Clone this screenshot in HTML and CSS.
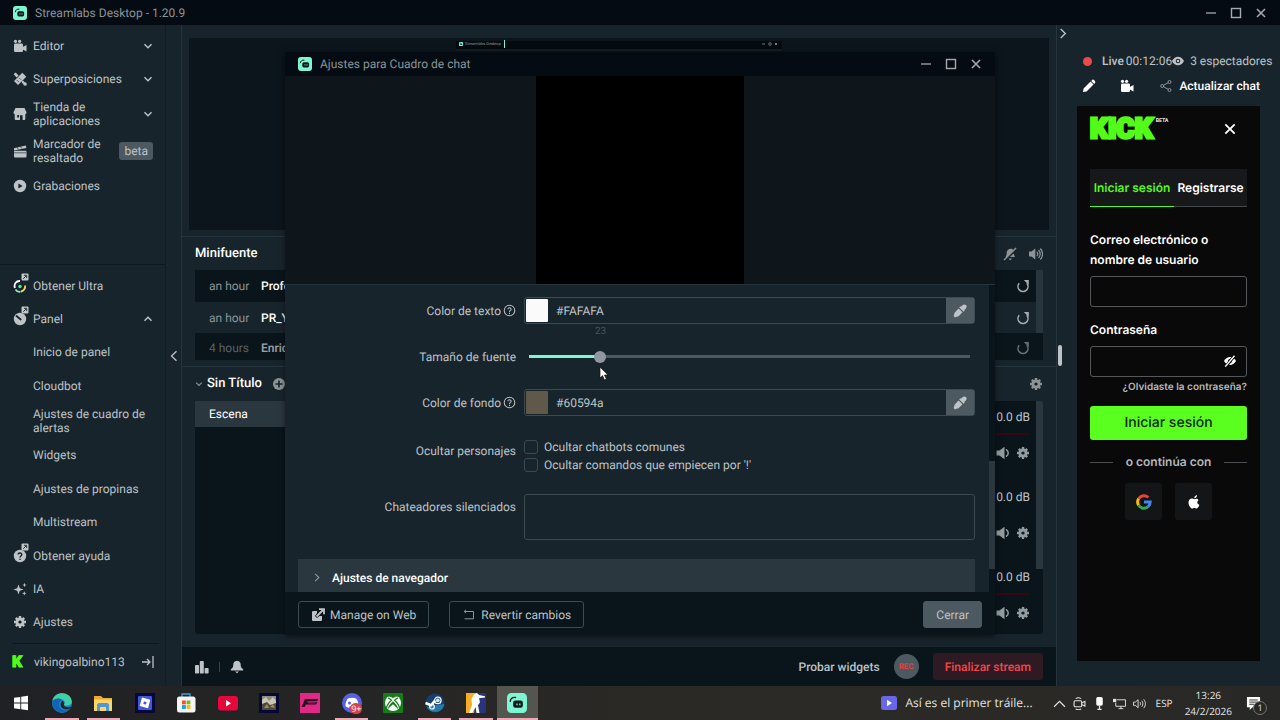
FILE: index.html
```html
<!DOCTYPE html>
<html lang="es">
<head>
    <meta charset="UTF-8">
    <meta name="viewport" content="width=device-width, initial-scale=1.0">
    <title>Streamlabs Desktop</title>
    <link rel="stylesheet" href="styles.css">
</head>
<body>
    <!-- shared icons -->
    <svg class="sprite" aria-hidden="true">
        <symbol id="slobs" viewBox="0 0 14 14">
            <rect width="14" height="14" rx="3" fill="#80f5d2"/>
            <rect x="4.300" y="5.200" width="6.800" height="5.200" rx="1.600" fill="#0a1a1f"/>
            <path d="M2.300 5.800C2.500 4 4 2.900 6 3.100" stroke="#0a1a1f" stroke-width="1" fill="none" stroke-linecap="round"/>
            <path d="M7 7.300v1.200M9 7.300v1.200" stroke="#80f5d2" stroke-width="0.900"/>
        </symbol>
        <symbol id="minimize" viewBox="0 0 12 12"><path d="M1 6h10" stroke="currentColor" stroke-width="1.300"/></symbol>
        <symbol id="maximize" viewBox="0 0 12 12"><rect x="1.500" y="1.500" width="9" height="9" fill="none" stroke="currentColor" stroke-width="1.400"/></symbol>
        <symbol id="close" viewBox="0 0 12 12"><path d="M2 2l8 8M10 2l-8 8" stroke="currentColor" stroke-width="1.600"/></symbol>
        <symbol id="chev-down" viewBox="0 0 10 10"><path d="M1.500 3.200L5 6.800l3.500-3.600" fill="none" stroke="currentColor" stroke-width="1.400"/></symbol>
        <symbol id="chev-up" viewBox="0 0 10 10"><path d="M1.500 6.800L5 3.200l3.500 3.600" fill="none" stroke="currentColor" stroke-width="1.400"/></symbol>
        <symbol id="chev-left" viewBox="0 0 8 12"><path d="M6.500 1.200L1.500 6l5 4.800" fill="none" stroke="currentColor" stroke-width="1.300"/></symbol>
        <symbol id="chev-right" viewBox="0 0 8 12"><path d="M1.500 1.200L6.500 6l-5 4.800" fill="none" stroke="currentColor" stroke-width="1.500"/></symbol>
        <symbol id="camera" viewBox="0 0 14 14">
            <g fill="currentColor"><circle cx="2.500" cy="2.300" r="1.600"/><circle cx="6.600" cy="2.300" r="1.600"/><rect x="1" y="4.600" width="9" height="8.400" rx="1.200"/><path d="M9.800 8l3.700-2v6.500l-3.700-2z"/></g>
        </symbol>
        <symbol id="brush" viewBox="0 0 14 14">
            <g fill="currentColor"><path d="M9.300.7l4 4-8.300 8.300-4-4zM.6 2.200L2.600.6l3 2.800-2 2zM10 8.400l1.500 1.500 2 3.500-3.600-1.700-1.500-1.700z"/><circle cx="12" cy="12" r="1.800"/></g>
            <path d="M3.800 8l2 2M6 5.800l2 2" stroke="#18242c" stroke-width="0.600"/>
        </symbol>
        <symbol id="store" viewBox="0 0 14 14">
            <path fill="currentColor" fill-rule="evenodd" d="M2.500 1h9l2 4.200c0 1.200-.6 1.800-1.200 2V12a1 1 0 0 1-1 1H9.600V8.200H7V13H2.700a1 1 0 0 1-1-1V7.200C1.100 7 .5 6.400.5 5.200zM4.200 8v2.500H6V8z"/>
        </symbol>
        <symbol id="clapper" viewBox="0 0 14 14">
            <g fill="currentColor"><rect x="1" y="6.800" width="12.500" height="6.700" rx="1"/><path d="M.8 4.300l12-2.900.6 2.600L1.200 6.400z"/></g>
            <path d="M4 3.200l1.400 2.300M7.500 2.400l1.400 2.300M1 8.800h12" stroke="#18242c" stroke-width="0.600"/>
        </symbol>
        <symbol id="play" viewBox="0 0 14 14"><circle cx="7" cy="7" r="6.200" fill="currentColor"/><path d="M5.400 4.500v5L9.600 7z" fill="#18242c"/></symbol>
        <symbol id="ext" viewBox="0 0 8 8"><rect x=".5" y=".5" width="7" height="7" rx="1" fill="#c0c6c9"/><path d="M2.300 5.700l3-3M3 2.300h2.700V5" fill="none" stroke="#18242c" stroke-width="0.900"/></symbol>
        <symbol id="gear" viewBox="0 0 14 14">
            <path d="M7 1v12M1 7h12M2.800 2.800l8.400 8.400M11.200 2.800l-8.400 8.400" stroke="currentColor" stroke-width="2.400"/>
            <circle cx="7" cy="7" r="3.200" fill="none" stroke="currentColor" stroke-width="2.600"/>
            <circle cx="7" cy="7" r="1.600" fill="#0d1a21"/>
        </symbol>
        <symbol id="speaker" viewBox="0 0 14 14"><path d="M.5 4.500h3L8.500.8v12.400l-5-3.700h-3z" fill="currentColor"/><path d="M10.500 3.800c2.300 1.600 2.300 4.800 0 6.400" fill="none" stroke="currentColor" stroke-width="1.500" stroke-linecap="round"/></symbol>
        <symbol id="reload" viewBox="0 0 14 14"><path d="M3.200 4.200a5 5 0 1 0 7.600 0" fill="none" stroke="currentColor" stroke-width="1.600"/><path d="M7.800 1h5v5z" fill="currentColor"/></symbol>
        <symbol id="dropper" viewBox="0 0 14 14">
            <path fill="currentColor" d="M13 1c-1.100-1-2.600-.7-3.500.2L8 2.700l-.6-.5-1.200 1.200 4.400 4.400 1.200-1.200-.5-.6 1.500-1.500c.9-.9 1.200-2.400.2-3.500zM5.600 4.500L2 8.200c-.7.700-.6 1.600-.9 2.600L.6 12l1.400 1.400 1.200-.6c1-.3 1.900-.2 2.600-.9l3.700-3.600z"/>
        </symbol>
        <symbol id="help" viewBox="0 0 14 14"><circle cx="7" cy="7" r="5.700" fill="none" stroke="currentColor" stroke-width="1.100"/><path d="M5.200 5.700C5.300 3.500 9 3.700 8.700 5.900 8.500 7 7 7 7 8.500M7 9.500v1.200" fill="none" stroke="currentColor" stroke-width="1.100"/></symbol>
    </svg>

    <header class="titlebar">
        <svg class="logo"><use href="#slobs"/></svg>
        <span>Streamlabs Desktop - 1.20.9</span>
        <div class="window-buttons">
            <button aria-label="Minimizar"><svg><use href="#minimize"/></svg></button>
            <button aria-label="Maximizar"><svg><use href="#maximize"/></svg></button>
            <button aria-label="Salir"><svg><use href="#close"/></svg></button>
        </div>
    </header>

    <div class="workspace">
        <nav class="sidebar">
            <ul class="menu menu-top">
                <li><a href="#"><svg class="icon"><use href="#camera"/></svg><span>Editor</span><svg class="chev"><use href="#chev-down"/></svg></a></li>
                <li><a href="#"><svg class="icon"><use href="#brush"/></svg><span>Superposiciones</span><svg class="chev"><use href="#chev-down"/></svg></a></li>
                <li class="double"><a href="#"><svg class="icon"><use href="#store"/></svg><span>Tienda de aplicaciones</span><svg class="chev"><use href="#chev-down"/></svg></a></li>
                <li class="double"><a href="#"><svg class="icon"><use href="#clapper"/></svg><span>Marcador de resaltado</span><em class="beta">beta</em></a></li>
                <li><a href="#"><svg class="icon"><use href="#play"/></svg><span>Grabaciones</span></a></li>
            </ul>
            <ul class="menu menu-bottom">
                <li><a href="#">
                    <svg class="icon" viewBox="0 0 14 14"><path d="M2 9a5 5 0 0 1 5-7" fill="none" stroke="#fff" stroke-width="1.800"/><path d="M2.500 10.500a5 5 0 0 0 5 2.200" fill="none" stroke="#8bf0a5" stroke-width="1.800"/><path d="M8 12.500a5 5 0 0 0 4-6" fill="none" stroke="#f2de55" stroke-width="1.800"/><circle cx="7" cy="7.500" r="1.700" fill="#55e8a0"/></svg>
                    <svg class="ext"><use href="#ext"/></svg><span>Obtener Ultra</span></a></li>
                <li><a href="#">
                    <svg class="icon" viewBox="0 0 14 14"><circle cx="7" cy="7" r="6.200" fill="currentColor"/><path d="M3.500 4l4.200 3.500" stroke="#18242c" stroke-width="1.800" stroke-linecap="round"/></svg>
                    <svg class="ext"><use href="#ext"/></svg><span>Panel</span><svg class="chev"><use href="#chev-up"/></svg></a></li>
                <li class="sub"><a href="#">Inicio de panel</a></li>
                <li class="sub"><a href="#">Cloudbot</a></li>
                <li class="sub double"><a href="#">Ajustes de cuadro de alertas</a></li>
                <li class="sub"><a href="#">Widgets</a></li>
                <li class="sub"><a href="#">Ajustes de propinas</a></li>
                <li class="sub"><a href="#">Multistream</a></li>
                <li><a href="#">
                    <svg class="icon" viewBox="0 0 14 14"><circle cx="7" cy="7" r="6.200" fill="currentColor"/><path d="M5 5.500C5.200 3.300 9 3.500 8.700 5.800 8.500 7 7 7 7 8.500M7 9.800v1.300" fill="none" stroke="#18242c" stroke-width="1.400"/></svg>
                    <svg class="ext"><use href="#ext"/></svg><span>Obtener ayuda</span></a></li>
                <li><a href="#">
                    <svg class="icon" viewBox="0 0 14 14"><path fill="currentColor" d="M5.500 2.500l1.300 3.700 3.700 1.300-3.700 1.300-1.300 3.700-1.300-3.700L.5 7.500l3.700-1.300zM11.500.8l.6 1.600 1.600.6-1.600.6-.6 1.600-.6-1.600L9.300 3l1.600-.6zM11.300 9.200l.6 1.500 1.500.6-1.500.6-.6 1.500-.6-1.500-1.500-.6 1.500-.6z"/></svg>
                    <span>IA</span></a></li>
                <li><a href="#"><svg class="icon"><use href="#gear"/></svg><span>Ajustes</span></a></li>
            </ul>
            <a class="account" href="#">
                <b>K</b><span>vikingoalbino113</span>
                <svg class="logout" viewBox="0 0 12 12"><path d="M0 6h7.500M5 3l3 3-3 3M11 0v12" fill="none" stroke="currentColor" stroke-width="1.300"/></svg>
            </a>
        </nav>

        <button class="collapse" aria-label="Contraer menú"><svg><use href="#chev-left"/></svg></button>

        <main class="editor">
            <div class="display">
                <div class="mirror">
                    <svg><use href="#slobs"/></svg>
                    <span>Streamlabs Desktop</span>
                    <i></i>
                    <svg class="mirror-buttons" viewBox="0 0 16 4"><path d="M0 2h3M13 1l2 2M15 1l-2 2" stroke="#8b9398" stroke-width="0.800"/><circle cx="8" cy="2" r="1.300" fill="none" stroke="#8b9398" stroke-width="0.700"/></svg>
                </div>
            </div>

            <section class="feed">
                <header>
                    <h2>Minifuente</h2>
                    <button aria-label="Silenciar avisos"><svg viewBox="0 0 14 14"><path d="M2.500 10c1.200-1.200 1-2.500 1.200-4.500C4.200 1 9.500.8 10.500 3.300L4 10zM7 10h5L10.500 6.500zM5.500 11.500h3.500l-1.700 2z" fill="currentColor"/><path d="M1 13L13 1" stroke="currentColor" stroke-width="1.400"/></svg></button>
                    <button aria-label="Volumen"><svg viewBox="0 0 14 14"><path d="M0 4.500h2.500L6.300 1.500v11L2.500 9.500H0z" fill="currentColor"/><path d="M7.700 4.800c1.200 1.200 1.200 3.200 0 4.400M9.500 3c2.200 2.200 2.200 5.800 0 8M11.300 1.500c3 3 3 8 0 11" fill="none" stroke="currentColor" stroke-width="1.200"/></svg></button>
                </header>
                <ul>
                    <li><time>an hour</time><b>Profeta</b><svg><use href="#reload"/></svg></li>
                    <li><time>an hour</time><b>PR_YT</b><svg><use href="#reload"/></svg></li>
                    <li><time>4 hours</time><b>Enrique</b><svg><use href="#reload"/></svg></li>
                </ul>
            </section>

            <section class="studio">
                <header>
                    <svg class="chev"><use href="#chev-down"/></svg>
                    <h2>Sin Título</h2>
                    <svg class="plus" viewBox="0 0 12 12"><circle cx="6" cy="6" r="6" fill="#8c9498"/><path d="M6 2.500v7M2.500 6h7" stroke="#18242c" stroke-width="1.600"/></svg>
                    <button aria-label="Ajustes del mezclador"><svg><use href="#gear"/></svg></button>
                </header>
                <div class="panels">
                    <div class="scenes"><a href="#">Escena</a></div>
                    <div class="mixer">
                        <div class="channel"><span>0.0 dB</span><i></i><div><svg><use href="#speaker"/></svg><svg><use href="#gear"/></svg></div></div>
                        <div class="channel quiet"><span>0.0 dB</span><i></i><div><svg><use href="#speaker"/></svg><svg><use href="#gear"/></svg></div></div>
                        <div class="channel"><span>0.0 dB</span><i></i><div><svg><use href="#speaker"/></svg><svg><use href="#gear"/></svg></div></div>
                    </div>
                </div>
            </section>

            <footer class="statusbar">
                <svg viewBox="0 0 14 14"><g fill="currentColor"><rect x="0" y="5" width="4" height="8.500" rx=".8"/><rect x="4.800" y="1" width="4" height="12.500" rx=".8"/><rect x="9.600" y="8" width="4" height="5.500" rx=".8"/></g></svg>
                <i></i>
                <svg viewBox="0 0 14 14"><path d="M7 .8c3 .5 3.800 2 3.800 5 0 1.800 1.200 2.500 2.400 3.600v1H.8v-1C2 8.300 3.200 7.600 3.200 5.800c0-3 .8-4.500 3.800-5zM5 11.500h4L7 13.300z" fill="currentColor"/></svg>
                <a href="#">Probar widgets</a>
                <button class="rec">REC</button>
                <button class="end">Finalizar stream</button>
            </footer>
        </main>

        <aside class="live">
            <button class="fold" aria-label="Ocultar chat"><svg><use href="#chev-right"/></svg></button>
            <span class="grip"></span>
            <div class="stats">
                <i class="dot"></i><b>Live</b><span>00:12:06</span>
                <svg viewBox="0 0 12 10"><path d="M0 5c3-5.800 9-5.800 12 0-3 5.800-9 5.800-12 0z" fill="currentColor"/><circle cx="6" cy="5" r="2.300" fill="#18242c"/><circle cx="6" cy="5" r="1.300" fill="currentColor"/></svg>
                <span class="viewers">3 espectadores</span>
            </div>
            <div class="tools">
                <svg viewBox="0 0 14 14"><path d="M1 13l.6-3.500L8.500 2.600l3 3L4.600 12.400zM9.200 1.900L10.400.7c.8-.6 3.400 1.600 2.900 2.900l-1.200 1.300z" fill="#fff"/></svg>
                <svg class="white"><use href="#camera"/></svg>
                <svg viewBox="0 0 12 12"><g fill="none" stroke="#8c9498"><circle cx="2.200" cy="6" r="1.500"/><circle cx="9.500" cy="2" r="1.500"/><circle cx="9.500" cy="10" r="1.500"/><path d="M3.500 5.300l4.700-2.600M3.500 6.700l4.700 2.600"/></g></svg>
                <a href="#">Actualizar chat</a>
            </div>
            <form class="kick" onsubmit="return false">
                <div class="brand"><strong>KICK</strong><sup>BETA</sup><button type="button" aria-label="Cerrar panel"><svg><use href="#close"/></svg></button></div>
                <div class="tabs"><button type="button" class="active">Iniciar sesión</button><button type="button">Registrarse</button></div>
                <label for="user">Correo electrónico o nombre de usuario</label>
                <input type="text" id="user">
                <label for="pass">Contraseña</label>
                <div class="password">
                    <input type="password" id="pass">
                    <svg viewBox="0 0 14 12"><path d="M1 6c3-5.300 9-5.300 12 0-3 5.300-9 5.300-12 0z" fill="#fff"/><circle cx="7" cy="6" r="2" fill="#090909"/><path d="M2.500 12L12 0" stroke="#090909" stroke-width="3"/><path d="M2.200 11.600L11.500.8" stroke="#fff" stroke-width="1.400"/></svg>
                </div>
                <a class="forgot" href="#">¿Olvidaste la contraseña?</a>
                <button class="login">Iniciar sesión</button>
                <p class="or">o continúa con</p>
                <div class="providers">
                    <button type="button" aria-label="Google"><svg viewBox="0 0 16 16"><g fill="none" stroke-width="3"><path d="M2.600 4.800a6.200 6.200 0 0 1 9.700-1.300" stroke="#ea4335"/><path d="M2.600 11.200a6.200 6.200 0 0 1 0-6.400" stroke="#fbbc05"/><path d="M12 12.700a6.200 6.200 0 0 1-9.400-1.500" stroke="#34a853"/><path d="M8 8h6.200c0 2-.7 3.600-2.200 4.700" stroke="#4285f4"/></g></svg></button>
                    <button type="button" aria-label="Apple"><svg viewBox="0 0 16 16"><path fill="#fff" d="M11.300 8.300c0-1.500 1.200-2.300 1.300-2.400-1.400-1.800-3.400-1.200-4.300-.7-1-.5-1.700-.8-2.600-.6C2.200 5 1.800 9 3.600 12.300c1.500 2.800 2.700 2.400 3.700 1.900.8-.3 1.400-.3 2.200 0 1.700.9 2.800-.8 3.900-3.300-1.500-.6-2.100-1.600-2.100-2.600zM8.300 4.200c-.1-1.700 1.100-3 2.700-3.300.2 1.800-1.200 3.200-2.700 3.300z"/></svg></button>
                </div>
            </form>
        </aside>
    </div>

    <div class="dialog" role="dialog" aria-labelledby="dialog-title">
        <header class="titlebar">
            <svg class="logo"><use href="#slobs"/></svg>
            <span id="dialog-title">Ajustes para Cuadro de chat</span>
            <div class="window-buttons">
                <button aria-label="Minimizar"><svg><use href="#minimize"/></svg></button>
                <button aria-label="Maximizar"><svg><use href="#maximize"/></svg></button>
                <button aria-label="Salir"><svg><use href="#close"/></svg></button>
            </div>
        </header>
        <div class="preview"><div></div></div>
        <form class="settings" id="settings" onsubmit="return false">
            <div class="field">
                <label for="text-color">Color de texto<svg><use href="#help"/></svg></label>
                <div class="color"><i class="swatch light"></i><input type="text" id="text-color" value="#FAFAFA"><button type="button" aria-label="Elegir color de texto"><svg><use href="#dropper"/></svg></button></div>
            </div>
            <div class="field">
                <label for="font-size">Tamaño de fuente</label>
                <div class="slider">
                    <input type="range" id="font-size" min="10" max="96" value="23">
                    <output for="font-size">23</output>
                    <svg class="cursor" viewBox="0 0 10 15"><path d="M1 1v11l2.600-2.300L5.400 14l2-.9-1.800-4.100H9z" fill="#fff" stroke="#111" stroke-width="0.700"/></svg>
                </div>
            </div>
            <div class="field">
                <label for="bg-color">Color de fondo<svg><use href="#help"/></svg></label>
                <div class="color"><i class="swatch brown"></i><input type="text" id="bg-color" value="#60594a"><button type="button" aria-label="Elegir color de fondo"><svg><use href="#dropper"/></svg></button></div>
            </div>
            <div class="field checks">
                <span>Ocultar personajes</span>
                <div>
                    <label><input type="checkbox">Ocultar chatbots comunes</label>
                    <label><input type="checkbox">Ocultar comandos que empiecen por '!'</label>
                </div>
            </div>
            <div class="field muted">
                <label for="muted">Chateadores silenciados</label>
                <textarea id="muted"></textarea>
            </div>
            <button type="button" class="accordion"><svg><use href="#chev-right"/></svg>Ajustes de navegador</button>
        </form>
        <footer class="actions">
            <button><svg viewBox="0 0 14 14"><path d="M1 4.500c0-1 .5-1.500 1.500-1.500H6v2L4 8l2 2 2.500-2H11v3.500c0 1-.5 1.500-1.500 1.500h-7C1.500 13 1 12.500 1 11.500z" fill="currentColor"/><path d="M5.500 8.500l7-7M8 1.200h5v5" fill="none" stroke="currentColor" stroke-width="1.800"/></svg>Manage on Web</button>
            <button><svg viewBox="0 0 14 14"><path d="M2 3.500h9.500v7.300H2.500M4 1.800L2.200 3.500 4 5.200" fill="none" stroke="#8c9498" stroke-width="1"/></svg>Revertir cambios</button>
            <button class="primary">Cerrar</button>
        </footer>
    </div>

    <footer class="taskbar">
        <div class="apps">
            <button aria-label="Inicio"><svg viewBox="0 0 20 20"><path fill="#fff" d="M3 4.800l6.300-.9v5.700H3zM10.200 3.800L17 2.800v6.800h-6.800zM3 10.500h6.300v5.700L3 15.300zM10.200 10.500H17v6.800l-6.800-1z"/></svg></button>
            <button class="open" aria-label="Edge"><svg viewBox="0 0 20 20"><circle cx="10" cy="10" r="10" fill="#1a86d0"/><path d="M.5 8C2-2.500 19-2 19.800 8.500c.3 4-4.800 5-7.800 3.200 2-2 .5-5.200-3-5.700C5 5.500 2 6.500.5 8z" fill="#43cfa5"/><path d="M.2 9c2-4 8-4.500 10-1.500-4 1-4.500 7 0 9 3 1.500 6 .5 8-1.500C14 22.500 0 21 .2 9z" fill="#1464b4"/><path d="M10.500 7.800c-3 2-2.500 6.500 1 8 2.300 1 5 .6 7-.9.800-.6.500-1.300-.4-1-4 1.200-6.800-.5-6.200-2.300.6-1.300-.2-3-1.400-3.800z" fill="#242424"/></svg></button>
            <button class="open" aria-label="Explorador"><svg viewBox="0 0 20 20"><path d="M1 3h7l2 2h9v13H1z" fill="#e9ab31"/><path d="M1 6.500h18V18H1z" fill="#fbd46c"/><path d="M4 18v-6.500L5.500 10h9l1.500 1.500V18h-3v-4H7v4z" fill="#4d9ad3"/></svg></button>
            <button aria-label="Roblox"><svg viewBox="0 0 20 20"><rect width="20" height="20" fill="#080837"/><rect x="3" y="3" width="14" height="14" rx="1" fill="#4158d3"/><path d="M7 4.600l8.300 2.200L13 15.200l-8.300-2.200zM8.900 8.400l-.6 2.500 2.700.7.600-2.500z" fill="#fff" fill-rule="evenodd"/></svg></button>
            <button aria-label="Tienda"><svg viewBox="0 0 20 20"><path d="M6 5V1h8v4" fill="none" stroke="#36a4dc" stroke-width="1.300"/><rect x="1" y="3.500" width="18.500" height="16" rx="2.500" fill="#f4f4f4"/><path d="M6 7.500h3.800v3.800H6z" fill="#f35325"/><path d="M10.600 7.500h3.800v3.800h-3.800z" fill="#81bc06"/><path d="M6 12.100h3.800v3.800H6z" fill="#05a6f0"/><path d="M10.600 12.100h3.800v3.800h-3.800z" fill="#ffba08"/></svg></button>
            <button aria-label="YouTube"><svg viewBox="0 0 20 20"><rect y="3" width="20" height="14.500" rx="3" fill="#e8073a"/><path d="M8 7v6.500l5-3.200z" fill="#fff"/></svg></button>
            <button aria-label="Juego"><svg viewBox="0 0 20 20"><rect width="20" height="20" fill="#080837"/><rect x="3" y="3" width="14" height="14" fill="#8c8f80"/><path d="M3 7l4-3 3 4 4-4 3 4v4H3z" fill="#c9c6b4"/><path d="M3 11l5-2 3 3 6-2v7H3z" fill="#4c4a3d"/><path d="M5 15l3-4 2 4zM11 14l3-3 2 4z" fill="#a48b5a"/></svg></button>
            <button aria-label="Forza"><svg viewBox="0 0 20 20"><rect width="20" height="20" fill="#e12887"/><path d="M5 6h13.500l-1.500 2.200H8l-1 1h10.500L16 11.500H6L4.500 14H1.500z" fill="#2b0c20"/><path d="M7.500 10h8" stroke="#e12887" stroke-width=".6"/></svg></button>
            <button class="open" aria-label="Discord"><svg viewBox="0 0 20 20"><circle cx="10" cy="10" r="10" fill="#5562e6"/><path d="M5.500 5.800c3-1.300 6-1.300 9 0 1.500 2.500 2.200 5 2 7.500-1.500 1.200-3 1.500-3.500 1.500l-.8-1.500H7.800L7 14.800c-1 0-2.500-.6-3.500-1.500-.2-2.500.5-5 2-7.500z" fill="#fff"/><circle cx="7.500" cy="10" r="1.500" fill="#5562e6"/></svg><em>9+</em></button>
            <button aria-label="Xbox"><svg viewBox="0 0 20 20"><rect width="20" height="20" rx="1" fill="#137d18"/><circle cx="10" cy="10" r="8" fill="#fff"/><path d="M4.500 16.500c1-3.500 3-6 5.500-8.200 2.500 2.200 4.500 4.700 5.500 8.200-1.500-1.700-3.300-3.600-5.500-5.300-2.200 1.700-4 3.600-5.500 5.300zM4.500 3.800C6.500 3 8.200 4 10 5.200 11.800 4 13.500 3 15.500 3.800 14 1.200 6 1.200 4.500 3.800z" fill="#137d18"/><path d="M5 5c1 .3 2.300 1.200 3.400 2.200C5.500 10 3.500 13 3.700 15M15 5c-1 .3-2.300 1.200-3.400 2.200C14.500 10 16.500 13 16.300 15" fill="none" stroke="#137d18" stroke-width="1.200"/></svg></button>
            <button class="open" aria-label="Steam"><svg viewBox="0 0 20 20"><circle cx="10" cy="10" r="9.500" fill="#153f73"/><path d="M1.800 14A9.500 9.500 0 0 0 18.500 14l1-3-8 1z" fill="#257ba8"/><path d="M.5 10l5.500 2.300 4-4.600" fill="none" stroke="#fff" stroke-width="2.600"/><circle cx="12.800" cy="7.400" r="3.200" fill="none" stroke="#fff" stroke-width="1.300"/><circle cx="12.800" cy="7.400" r="1.900" fill="#dce6ee"/><circle cx="7" cy="13.700" r="2.300" fill="none" stroke="#fff" stroke-width="1.200"/></svg></button>
            <button class="open" aria-label="Counter-Strike"><svg viewBox="0 0 20 20"><rect width="20" height="20" fill="#f3ae22"/><path d="M11 0h9v20H8z" fill="#28357d"/><path d="M8 1.500l3-1.500 2 2 6 1.200v1.200l-6 .8 1 4-2 3 1.500 7.800h-3L9.500 14l-3.500 6H3l3-8-.5-6z" fill="#fff"/></svg></button>
            <button class="open current" aria-label="Streamlabs"><svg><use href="#slobs"/></svg></button>
        </div>
        <a class="news" href="#"><svg viewBox="0 0 16 14"><rect width="16" height="14" rx="2.500" fill="#6867e8"/><path d="M6 3.700v6.600L11 7z" fill="#fff"/></svg>Así es el primer tráile...</a>
        <div class="tray">
            <svg viewBox="0 0 12 12"><path d="M1 9l5-5 5 5" fill="none" stroke="currentColor" stroke-width="1.100"/></svg>
            <svg viewBox="0 0 12 12"><rect x="1" y="3.500" width="7" height="5.500" rx="1" fill="none" stroke="currentColor"/><path d="M8 5.500l3-1.500v4.500L8 7M2.500 1.500Q5 0 7.500 1.500M2.500 11Q5 12.500 7.500 11" fill="none" stroke="currentColor"/></svg>
            <svg viewBox="0 0 12 12"><rect x="3" y="0" width="6" height="8" rx="1.500" fill="#fff"/><path d="M6 8v3M4 11.500h4" stroke="currentColor" stroke-width="1.200"/></svg>
            <svg viewBox="0 0 14 12"><path d="M4 2h9.500v7H3V5M6 11.500h5M8.500 9v2.500" fill="none" stroke="currentColor"/><path d="M0 1h3.500v3.500H0z" fill="currentColor"/></svg>
            <svg viewBox="0 0 14 12"><path d="M.5 4.500h2L5.500 2v8.500l-3-2.500h-2zM7.500 4.500c.8 1 .8 2.500 0 3.500M9.500 3c1.500 2 1.500 4.500 0 6.500M11.500 1.500c2.500 3 2.500 6.500 0 9.500" fill="none" stroke="currentColor"/></svg>
        </div>
        <span class="lang">ESP</span>
        <div class="clock"><span>13:26</span><span>24/2/2026</span></div>
        <button class="notices" aria-label="Notificaciones"><svg viewBox="0 0 16 16"><path d="M1 1h14v11H7l-3 3v-3H1z" fill="#fff"/><path d="M3.500 4.200h9M3.500 6.500h9M3.500 8.800h5" stroke="#2a2927"/></svg><em>1</em></button>
    </footer>
</body>
</html>
```

FILE: styles.css
```css
* {
    box-sizing: border-box;
}

body {
    margin: 0;
    height: 100vh;
    display: flex;
    flex-direction: column;
    position: relative;
    overflow: hidden;
    background: #18242c;
    color: #bdc3c6;
    font: 12px/14px Roboto, "Liberation Sans", sans-serif;
    text-rendering: geometricPrecision;
}

button, input, textarea {
    font: inherit;
    color: inherit;
    border: 0;
    padding: 0;
    margin: 0;
    background: none;
    text-rendering: inherit;
}

a {
    color: inherit;
    text-decoration: none;
}

ul {
    list-style: none;
    margin: 0;
    padding: 0;
}

h2 {
    margin: 0;
    font-size: 13px;
    font-weight: 500;
    color: #fff;
}

svg {
    display: block;
    flex: none;
    width: 14px;
    height: 14px;
}

em {
    font-style: normal;
}

.sprite {
    display: none;
}

/* window title bars */
.titlebar {
    display: flex;
    align-items: center;
    flex: none;
    height: 25px;
    padding: 0 13px;
    background: #040b12;
    color: #8b9398;
}

.titlebar .logo {
    margin-right: 8px;
}

.window-buttons {
    display: flex;
    gap: 13px;
    margin-left: auto;
    color: #a4abae;
}

.window-buttons svg {
    width: 12px;
    height: 12px;
}

/* layout */
.workspace {
    flex: 1;
    min-height: 0;
    display: grid;
    grid-template-columns: 166px 15px 1fr 223px;
    grid-template-rows: minmax(0, 1fr);
}

.sidebar {
    display: flex;
    flex-direction: column;
    border-right: 1px solid #121c23;
}

.menu {
    display: flex;
    flex-direction: column;
    justify-content: space-between;
}

.menu-top {
    height: 173px;
    margin: 4px 0 62px;
}

.menu-bottom {
    flex: 1;
    padding: 4px 0;
    border-top: 1px solid #0d171d;
}

.menu a {
    display: flex;
    align-items: center;
    position: relative;
    height: 33px;
    padding: 0 12px 0 13px;
}

.menu .double a {
    height: 36px;
}

.menu .icon {
    margin-right: 6px;
}

.menu span {
    flex: 1;
}

.menu .sub a {
    padding-left: 33px;
}

.menu .ext {
    position: absolute;
    left: 21px;
    top: 4px;
    width: 8px;
    height: 8px;
}

.menu .chev {
    width: 10px;
    height: 10px;
}

.beta {
    padding: 2px 5px;
    border-radius: 3px;
    background: #4c5960;
}

.account {
    display: flex;
    align-items: center;
    height: 43px;
    margin: 0 6px 0 12px;
    padding-bottom: 7px;
    border-top: 1px solid #0d171d;
}

.account b {
    width: 22px;
    font-size: 16px;
    font-weight: 900;
    color: #53fc18;
    -webkit-text-stroke: 1px #53fc18;
}

.account .logout {
    width: 12px;
    height: 12px;
    margin-left: auto;
    margin-right: 5px;
}

.collapse {
    display: flex;
    align-items: center;
    justify-content: center;
}

.collapse svg {
    width: 8px;
    height: 12px;
}

/* editor */
.editor {
    display: flex;
    flex-direction: column;
    border: solid #26343c;
    border-width: 0 1px;
}

.display {
    height: 192px;
    margin: 13px 7px 6px;
    padding-top: 3px;
    background: #0b151b;
}

.mirror {
    display: flex;
    align-items: center;
    width: 326px;
    height: 10px;
    margin: 0 auto;
    padding: 0 4px 2px 3px;
    border-bottom: 2px solid #141d20;
    background: #040b10;
}

.mirror svg {
    width: 4px;
    height: 4px;
}

.mirror span {
    width: 41px;
    padding-left: 2px;
    color: #8b9398;
    font-size: 4px;
    line-height: 6px;
}

.mirror i {
    width: 1px;
    height: 8px;
    background: #80f5d2;
}

.mirror .mirror-buttons {
    width: 16px;
    margin-left: auto;
}

.feed, .studio {
    padding: 0 13px;
    border-top: 1px solid #26343c;
}

.feed {
    padding-bottom: 6px;
}

.feed header, .studio header {
    display: flex;
    align-items: center;
    height: 33px;
    color: #8c9498;
}

.feed header h2 {
    margin-right: auto;
}

.feed header button {
    margin-left: 12px;
}

.feed ul {
    height: 90px;
    overflow: hidden;
    background: linear-gradient(#29353c, #29353c) right top / 7px 63px no-repeat #09151b;
}

.feed li {
    display: flex;
    align-items: center;
    height: 32px;
    margin-right: 7px;
    padding: 0 6px 0 14px;
}

.feed li:nth-child(2) {
    height: 31px;
    background: #18242c;
}

.feed li:last-child {
    height: 30px;
    opacity: 0.6;
}

.feed time {
    width: 52px;
    color: #8c9498;
}

.feed b {
    font-weight: 500;
    color: #fff;
}

.feed li svg {
    margin-left: auto;
    color: #a5acaf;
}

.studio {
    flex: 1;
    display: flex;
    flex-direction: column;
    min-height: 0;
    padding-bottom: 13px;
}

.studio header {
    height: 34px;
}

.studio .chev {
    width: 8px;
    height: 8px;
    margin-right: 4px;
}

.studio .plus {
    width: 12px;
    height: 12px;
    margin-left: 11px;
}

.studio header button {
    margin-left: auto;
}

.panels {
    flex: 1;
    min-height: 0;
    display: grid;
    grid-template-columns: 1fr 1fr;
    gap: 12px;
}

.scenes, .mixer {
    border-radius: 3px;
    background: #09151b;
}

.scenes a {
    display: block;
    padding: 6px 14px;
    background: #2b373e;
    color: #fff;
}

.mixer {
    overflow: hidden;
    background: linear-gradient(#2b373e, #2b373e) right top / 7px 168px no-repeat #09151b;
}

.channel {
    display: flex;
    flex-direction: column;
    align-items: flex-end;
    height: 80px;
    padding: 9px 13px 0 0;
}

.channel i {
    width: 100%;
    height: 2px;
    margin: 9px 0 11px;
    background: #35080f;
}

.channel.quiet i {
    background: none;
}

.channel div {
    display: flex;
    gap: 6px;
    color: #939b9f;
}

.statusbar {
    display: flex;
    align-items: center;
    flex: none;
    height: 39px;
    padding: 0 13px;
    background: #09151b;
}

.statusbar i {
    width: 1px;
    height: 10px;
    margin: 0 10px;
    background: #36434a;
}

.statusbar a {
    margin-left: auto;
    font-weight: 500;
}

.rec {
    width: 25px;
    height: 25px;
    margin: 0 14px;
    border-radius: 50%;
    background: #4c5960;
    color: #e43f41;
    font-size: 8px;
    font-weight: 700;
}

.end {
    height: 27px;
    padding: 0 12px;
    border-radius: 3px;
    background: #2e1a23;
    color: #f5464a;
    font-weight: 500;
}

/* live chat column */
.live {
    position: relative;
    display: flex;
    flex-direction: column;
    padding: 27px 20px 25px;
}

.fold {
    position: absolute;
    left: 2px;
    top: 3px;
}

.fold svg {
    width: 8px;
    height: 11px;
}

.grip {
    position: absolute;
    left: 1px;
    top: 320px;
    width: 4px;
    height: 21px;
    border-radius: 2px;
    background: #bdc3c6;
}

.stats, .tools {
    display: flex;
    align-items: center;
    flex: none;
    height: 18px;
    white-space: nowrap;
}

.dot {
    flex: none;
    width: 9px;
    height: 9px;
    margin: 0 10px 0 6px;
    border-radius: 50%;
    background: #e94b4b;
}

.stats b {
    margin-right: 2px;
    font-weight: 500;
}

.stats svg {
    width: 12px;
    height: 10px;
}

.viewers {
    margin-left: 6px;
}

.tools {
    height: 32px;
    padding-left: 5px;
}

.tools svg {
    margin-right: 24px;
}

.tools svg:nth-child(3) {
    width: 12px;
    margin: 0;
}

.tools .white {
    color: #fff;
    margin-right: 26px;
}

.tools a {
    margin-left: auto;
    font-weight: 500;
    color: #fff;
}

.kick {
    flex: 1;
    display: flex;
    flex-direction: column;
    margin-top: 4px;
    padding: 11px 13px;
    background: #090909;
    color: #fff;
    font: 600 12px/20px Inter, "Liberation Sans", sans-serif;
}

.brand {
    display: flex;
    height: 24px;
    margin-bottom: 28px;
}

.brand strong {
    font: 900 28px/24px Roboto, sans-serif;
    color: #53fc18;
    -webkit-text-stroke: 3px #53fc18;
}

.brand sup {
    margin-left: 3px;
    font-size: 5px;
    line-height: 8px;
}

.brand button {
    margin-left: auto;
    margin-right: 10px;
}

.brand button svg {
    width: 14px;
    height: 14px;
}

.tabs {
    display: flex;
    height: 38px;
    margin-bottom: 23px;
    background: #17181a;
    white-space: nowrap;
}

.tabs button {
    flex: 1 1 auto;
    border-bottom: 1px solid #45474a;
}

.tabs .active {
    flex: none;
    width: 84px;
    color: #53fc18;
    border-color: #53fc18;
}

.kick input {
    width: 100%;
    height: 31px;
    margin: 6px 0 13px;
    padding: 0 10px;
    border: 1px solid #55575a;
    border-radius: 3px;
}

.password {
    position: relative;
}

.kick .password input {
    display: block;
    margin-bottom: 0;
}

.password svg {
    position: absolute;
    right: 10px;
    top: 15px;
    height: 12px;
}

.forgot {
    align-self: flex-end;
    color: #b5b8bb;
    font-size: 10px;
    white-space: nowrap;
}

.login {
    height: 34px;
    margin: 9px 0 12px;
    border-radius: 3px;
    background: #5bff1f;
    color: #0d2506;
    font-size: 14px;
    font-weight: 500;
}

.or {
    display: flex;
    align-items: center;
    justify-content: space-between;
    margin: 0 0 11px;
    color: #b5b8bb;
}

.or::before, .or::after {
    content: "";
    width: 23px;
    height: 1px;
    background: #4a4c50;
}

.providers {
    display: flex;
    justify-content: center;
    gap: 13px;
}

.providers button {
    display: flex;
    align-items: center;
    justify-content: center;
    width: 37px;
    height: 37px;
    border-radius: 3px;
    background: #141517;
}

.providers svg {
    width: 16px;
    height: 16px;
}

/* chat box settings window, floating over the editor */
.dialog {
    position: absolute;
    inset: 52px 285px 85px;
    display: flex;
    flex-direction: column;
    background: #18242c;
    box-shadow: 0 2px 6px rgba(0, 0, 0, 0.5);
}

.dialog .titlebar {
    height: 24px;
}

.preview {
    flex: none;
    display: flex;
    justify-content: center;
    height: 209px;
    border-bottom: 1px solid #26343c;
    background: #0e161c;
}

.preview div {
    width: 208px;
    background: #000;
}

.settings {
    flex: 1;
    min-height: 0;
    padding: 12px 20px 0 13px;
    background: linear-gradient(#2b373e, #2b373e) right 176px / 6px 108px no-repeat, linear-gradient(#09151b, #09151b) right top / 6px 100% no-repeat;
}

.field {
    display: grid;
    grid-template-columns: 218px 1fr;
    gap: 8px;
    align-items: center;
    height: 27px;
    margin-bottom: 19px;
}

.field > label, .field > span {
    display: flex;
    justify-content: flex-end;
    align-items: center;
}

.field label svg {
    margin-left: 2px;
    width: 13px;
    height: 13px;
}

.color {
    display: flex;
    height: 27px;
    border: 1px solid #3c4a51;
    border-radius: 3px;
}

.swatch {
    width: 22px;
    margin: 1px;
    border-radius: 1px;
}

.light {
    background: #fafafa;
}

.brown {
    background: #60594a;
}

.color input {
    flex: 1;
    padding-left: 7px;
}

.color button {
    display: flex;
    align-items: center;
    justify-content: center;
    width: 28px;
    background: #4c5960;
}

.slider {
    position: relative;
    padding: 0 5px;
}

.slider input {
    appearance: none;
    display: block;
    width: 100%;
    height: 12px;
    background: linear-gradient(90deg, #80f5d2 16%, #4c5960 16%) center / 100% 3px no-repeat;
}

.slider input::-webkit-slider-thumb {
    appearance: none;
    width: 12px;
    height: 12px;
    border-radius: 50%;
    background: #91979f;
}

.slider output {
    position: absolute;
    left: 71px;
    top: -26px;
    color: #46535a;
    font-size: 10px;
}

.cursor {
    position: absolute;
    left: 75px;
    top: 15px;
    width: 10px;
    height: 15px;
}

.checks {
    height: 36px;
    margin: 22px 0 20px;
    align-items: start;
}

.checks > span {
    padding-top: 6px;
}

.checks label {
    display: flex;
    align-items: center;
    height: 18px;
}

.checks input {
    appearance: none;
    width: 14px;
    height: 14px;
    margin-right: 6px;
    border: 1px solid #3c4a51;
    border-radius: 3px;
}

.muted {
    height: 46px;
    align-items: start;
}

.muted > label {
    padding-top: 6px;
}

.muted textarea {
    height: 46px;
    border: 1px solid #3c4a51;
    border-radius: 3px;
    resize: none;
}

.accordion {
    display: flex;
    align-items: center;
    width: 100%;
    height: 33px;
    padding: 4px 15px 0;
    background: #2b373e;
    color: #fff;
    font-weight: 500;
}

.accordion svg {
    width: 8px;
    height: 9px;
    margin-right: 11px;
    color: #8c9498;
}

.actions {
    display: flex;
    flex: none;
    gap: 20px;
    height: 43px;
    padding: 9px 13px 7px;
    background: #09151b;
    z-index: 1;
}

.actions button {
    display: flex;
    align-items: center;
    padding: 0 12px;
    border: 1px solid #3c4a51;
    border-radius: 3px;
}

.actions svg {
    margin-right: 5px;
}

.actions .primary {
    margin-left: auto;
    border-color: #4c5960;
    background: #4c5960;
}

/* desktop task bar */
.taskbar {
    display: flex;
    align-items: center;
    flex: none;
    height: 34px;
    background: linear-gradient(90deg, #202124, #2c2a26 60%, #282826);
    color: #e3e3e2;
    font: 12px/16px "Open Sans", "Noto Sans", sans-serif;
}

.apps {
    display: grid;
    grid-template-columns: repeat(13, 1fr);
    width: 538px;
    height: 34px;
}

.apps button {
    display: flex;
    align-items: center;
    justify-content: center;
    position: relative;
}

.apps svg {
    width: 20px;
    height: 20px;
}

.apps .open::after {
    content: "";
    position: absolute;
    left: 4px;
    right: 4px;
    bottom: 0;
    height: 2px;
    background: #eda8b7;
}

.apps .current {
    background: #555550;
}

.apps .current::after {
    left: 0;
    right: 0;
}

.apps em {
    position: absolute;
    right: 10px;
    bottom: 6px;
    padding: 0 1px;
    border-radius: 6px;
    background: #dc4147;
    color: #fff;
    font-size: 9px;
    line-height: 11px;
}

.news {
    display: flex;
    align-items: center;
    gap: 8px;
    margin-left: auto;
}

.news svg {
    width: 16px;
}

.tray {
    display: flex;
    gap: 7px;
    margin: 0 10px 0 20px;
}

.tray svg {
    width: 13px;
    height: 13px;
}

.lang {
    font-size: 10px;
}

.clock {
    display: flex;
    flex-direction: column;
    margin: 0 14px 0 12px;
    font-size: 10px;
    text-align: center;
}

.notices {
    position: relative;
    margin-right: 19px;
}

.notices svg {
    width: 15px;
    height: 15px;
}

.notices em {
    position: absolute;
    left: 7px;
    top: 5px;
    width: 14px;
    height: 14px;
    border: 1px solid #777;
    border-radius: 50%;
    background: #282826;
    font-size: 9px;
    line-height: 12px;
}
```
